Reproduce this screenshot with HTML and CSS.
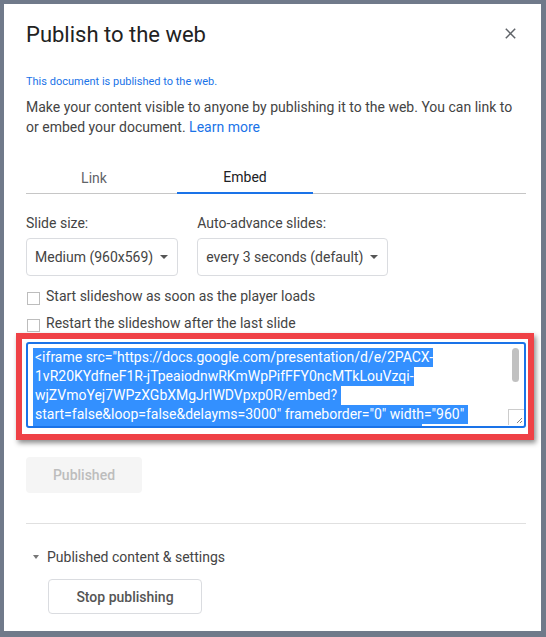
FILE: index.html
```html
<!DOCTYPE html>
<html lang="en">
<head>
  <meta charset="UTF-8" />
  <meta name="viewport" content="width=device-width, initial-scale=1.0"/>
  <title>Publish to the web</title>
  <link rel="stylesheet" href="styles.css">
</head>
<body>
  <div class="dialog">
    <div class="dialog-header">
      <h1>Publish to the web</h1>
      <button class="close-btn" aria-label="Close">
        <svg width="11" height="11" viewBox="0 0 11 11"><path d="M0.8 0.8L10.2 10.2M10.2 0.8L0.8 10.2" stroke="#5f6368" stroke-width="1.5" fill="none"/></svg>
      </button>
    </div>

    <p class="status">This document is published to the web.</p>
    <p class="intro">Make your content visible to anyone by publishing it to the web. You can link to or embed your document. <a href="#">Learn more</a></p>

    <div class="tabs">
      <div class="tab">Link</div>
      <div class="tab active">Embed</div>
    </div>

    <div class="options">
      <div class="label">Slide size:</div>
      <div class="label">Auto-advance slides:</div>
      <div class="select">Medium (960x569) <span class="caret"></span></div>
      <div class="select">every 3 seconds (default) <span class="caret"></span></div>
    </div>

    <div class="check first"><span class="box"></span>Start slideshow as soon as the player loads</div>
    <div class="check"><span class="box"></span>Restart the slideshow after the last slide</div>

    <div class="embed-box">
      <div class="code">
        <div class="code-text">
          <div class="code-line"><span>&lt;iframe src="https://docs.google.com/presentation/d/e/2PACX-</span></div>
          <div class="code-line"><span>1vR20KYdfneF1R-jTpeaiodnwRKmWpPifFFY0ncMTkLouVzqi-</span></div>
          <div class="code-line"><span>wjZVmoYej7WPzXGbXMgJrIWDVpxp0R/embed? </span></div>
          <div class="code-line"><span>start=false&amp;loop=false&amp;delayms=3000" frameborder="0" width="960" </span></div>
          <div class="code-line"><span>height="569" allowfullscreen="true" mozallowfullscreen="true" </span></div>
        </div>
        <div class="code-side">
          <div class="thumb"></div>
          <div class="grip">
            <svg width="15" height="15" viewBox="0 0 15 15"><path d="M13 8L8 13M13 11L11 13" stroke="#888" stroke-width="1" fill="none"/></svg>
          </div>
        </div>
      </div>
    </div>

    <button class="published" disabled>Published</button>

    <div class="divider"></div>

    <div class="disclosure"><span class="tri"></span>Published content &amp; settings</div>
    <button class="stop">Stop publishing</button>
  </div>
</body>
</html>
```

FILE: styles.css
```css
body {
  margin: 0;
  background: #707a8a;
  font-family: Roboto, "Liberation Sans", sans-serif;
  color: #444;
}
.dialog {
  margin: 4px 5px 0 4px;
  height: 627px;
  box-sizing: border-box;
  background: #fff;
  padding: 18px 15px 0 22px;
}
.dialog-header {
  display: flex;
  justify-content: space-between;
  align-items: center;
}
h1 {
  margin: 0;
  font-size: 22px;
  font-weight: 400;
  line-height: 26px;
  color: #222;
}
.close-btn {
  width: 24px;
  height: 24px;
  margin: -3px 4px 0 0;
  padding: 0;
  border: none;
  background: none;
  display: flex;
  align-items: center;
  justify-content: center;
}
.status {
  margin: 26px 0 0;
  font-size: 11px;
  line-height: 16px;
  color: #1a73e8;
}
.intro {
  margin: 7px 0 0;
  font-size: 14px;
  line-height: 20px;
}
.intro a {
  color: #1a73e8;
  text-decoration: none;
}
.tabs {
  margin-top: 26px;
  height: 30px;
  display: flex;
  align-items: flex-start;
  gap: 15px;
  border-bottom: 1px solid #c6c6c6;
}
.tab {
  width: 136px;
  text-align: center;
  font-size: 14px;
  line-height: 30px;
  color: #5f6368;
}
.tab.active {
  line-height: 29px;
  color: #202124;
  border-bottom: 2px solid #1a73e8;
}
.options {
  margin-top: 19px;
  display: grid;
  grid-template-columns: max-content max-content;
  column-gap: 19px;
  row-gap: 5px;
}
.label {
  font-size: 14px;
  line-height: 20px;
}
.select {
  justify-self: start;
  height: 38px;
  box-sizing: border-box;
  display: inline-flex;
  align-items: center;
  gap: 7px;
  padding: 0 9px 0 8px;
  border: 1px solid #dadce0;
  border-radius: 4px;
  font-size: 14px;
}
.caret {
  width: 0;
  height: 0;
  border-left: 4px solid transparent;
  border-right: 4px solid transparent;
  border-top: 4px solid #555;
}
.check {
  margin-top: 7px;
  display: flex;
  align-items: center;
  gap: 6px;
  font-size: 14px;
  line-height: 20px;
}
.check.first {
  margin-top: 10px;
}
.box {
  width: 11px;
  height: 11px;
  margin: 4px 0 0 1px;
  border: 1px solid #bdbdbd;
}
.embed-box {
  margin: 0 -8px 0 -10px;
  border: 6px solid #ef4146;
  padding: 3px 2px 6px 4px;
  background: #fff;
  box-shadow: 2px 3px 5px rgba(0, 0, 0, 0.45);
}
.code {
  display: flex;
  height: 86px;
  box-sizing: border-box;
  border: 2px solid #1a73e8;
  border-radius: 3px;
  overflow: hidden;
}
.code-text {
  flex: 1;
  padding: 4px 0 0 5px;
  overflow: hidden;
  font-size: 14px;
  line-height: 19px;
  color: #fff;
}
.code-line {
  height: 19px;
  white-space: nowrap;
}
.code-line span {
  display: inline-block;
  padding-left: 2px;
  background: #3390ff;
  white-space: pre;
}
.code-side {
  width: 17px;
  display: flex;
  flex-direction: column;
  justify-content: space-between;
}
.thumb {
  width: 7px;
  height: 34px;
  margin: 4px 0 0 5px;
  background: #c1c1c1;
  border-radius: 4px;
}
.grip {
  width: 15px;
  height: 15px;
  margin: 0 0 1px 1px;
  border-left: 1px solid #ccc;
  border-top: 1px solid #ccc;
  background: #fff;
}
.grip svg {
  display: block;
}
.published {
  display: block;
  margin-top: 17px;
  width: 116px;
  height: 36px;
  border: none;
  border-radius: 4px;
  background: #f5f5f5;
  color: #bdbdbd;
  font-family: Roboto, "Liberation Sans", sans-serif;
  font-size: 14px;
  font-weight: 500;
}
.divider {
  margin-top: 30px;
  border-top: 1px solid #e0e0e0;
}
.disclosure {
  margin-top: 23px;
  display: flex;
  align-items: center;
  gap: 8px;
  font-size: 14px;
  line-height: 20px;
}
.tri {
  margin-left: 7px;
  width: 0;
  height: 0;
  border-left: 3px solid transparent;
  border-right: 3px solid transparent;
  border-top: 4px solid #777;
}
.stop {
  display: block;
  margin: 12px 0 0 22px;
  width: 154px;
  height: 35px;
  border: 1px solid #dadce0;
  border-radius: 4px;
  background: #fff;
  color: #555;
  font-family: Roboto, "Liberation Sans", sans-serif;
  font-size: 14px;
  font-weight: 500;
}
```
